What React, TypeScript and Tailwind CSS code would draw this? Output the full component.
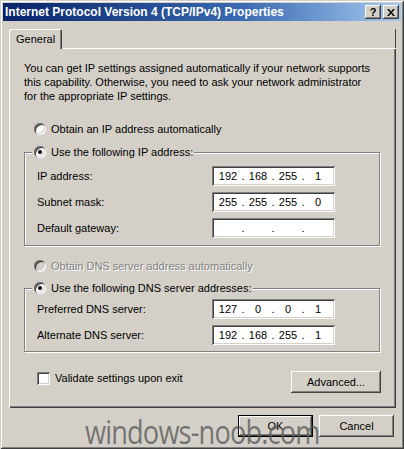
import React from "react";

const raised =
  "shadow-[inset_-1px_-1px_0_#404040,inset_1px_1px_0_#ffffff,inset_-2px_-2px_0_#808080,inset_2px_2px_0_#d4d0c8]";
const sunken =
  "shadow-[inset_1px_1px_0_#808080,inset_-1px_-1px_0_#ffffff,inset_2px_2px_0_#404040,inset_-2px_-2px_0_#d4d0c8]";

function Radio({ checked = false, disabled = false }: { checked?: boolean; disabled?: boolean }) {
  return (
    <span
      className={`flex w-[12px] h-[12px] shrink-0 items-center justify-center rounded-full ${
        disabled ? "bg-[#d4d0c8]" : "bg-white"
      } shadow-[inset_1px_1px_0_#808080,inset_-1px_-1px_0_#ffffff,inset_2px_2px_0_#404040,inset_-2px_-2px_0_#d4d0c8]`}
    >
      {checked && <span className="w-[4px] h-[4px] rounded-full bg-black" />}
    </span>
  );
}

function IpField({ parts }: { parts: string[] }) {
  return (
    <div className={`flex w-[123px] h-[20px] items-center bg-white pl-[4px] ${sunken}`}>
      {parts.map((p, i) => (
        <React.Fragment key={i}>
          {i > 0 && <span className="w-[6px] text-center">.</span>}
          <span className="w-[24px] text-center">{p}</span>
        </React.Fragment>
      ))}
    </div>
  );
}

function Row({ label, parts }: { label: string; parts: string[] }) {
  return (
    <div className="flex items-center h-[20px]">
      <span className="w-[187px] pl-[12px]">{label}</span>
      <IpField parts={parts} />
    </div>
  );
}

function Button({ children, isDefault = false, className = "" }: { children: React.ReactNode; isDefault?: boolean; className?: string }) {
  return (
    <div
      className={`flex items-center justify-center h-[22px] ${
        isDefault ? "border border-black" : ""
      } ${className}`}
    >
      <div className={`flex w-full h-full items-center justify-center ${raised}`}>{children}</div>
    </div>
  );
}

export default function App() {
  return (
    <div className="relative flex flex-col w-[404px] h-[449px] overflow-hidden bg-[#d4d0c8] p-[3px] font-['Liberation_Sans',Arial,sans-serif] text-[11px] leading-[14px] text-black shadow-[inset_1px_1px_0_#d4d0c8,inset_-1px_-1px_0_#404040,inset_2px_2px_0_#ffffff,inset_-2px_-2px_0_#808080]">
      {/* Title bar */}
      <div className="flex h-[18px] items-center justify-between bg-linear-to-r from-[#0a246a] via-[#3a6ab0] via-60% to-[#a6caf0] pl-[2px] pr-[2px]">
        <span className="text-[12px] font-bold text-white whitespace-nowrap">
          Internet Protocol Version 4 (TCP/IPv4) Properties
        </span>
        <div className="flex gap-[2px]">
          <div className={`flex w-[16px] h-[14px] items-center justify-center bg-[#d4d0c8] ${raised}`}>
            <span className="text-[11px] font-bold leading-[11px] pt-[1px]">?</span>
          </div>
          <div className={`flex w-[16px] h-[14px] items-center justify-center bg-[#d4d0c8] ${raised}`}>
            <svg width="8" height="7" viewBox="0 0 8 7" className="mt-[1px]">
              <path d="M0 0h2l2 2.5L6 0h2L5 3.5 8 7H6L4 4.5 2 7H0l3-3.5z" fill="#000" />
            </svg>
          </div>
        </div>
      </div>

      {/* Body */}
      <div className="flex flex-col pl-[6px] pr-[5px]">
        {/* Tabs row */}
        <div className="mt-[8px] flex h-[20px]">
          <div className="flex w-[53px] h-[20px] items-center rounded-t-[2px] pl-[7px] shadow-[inset_1px_1px_0_#ffffff,inset_-1px_0_0_#404040,inset_-2px_0_0_#808080]">
            General
          </div>
          <div className="flex-1 border-b border-white shadow-[inset_-1px_0_0_#404040]" />
        </div>

        {/* Panel */}
        <div className="h-[359px] pt-[12px] pl-[15px] pr-[16px] shadow-[inset_1px_0_0_#ffffff,inset_-1px_-1px_0_#404040,inset_-2px_-2px_0_#808080]">
          <div className="whitespace-nowrap">
            <div>You can get IP settings assigned automatically if your network supports</div>
            <div>this capability. Otherwise, you need to ask your network administrator</div>
            <div>for the appropriate IP settings.</div>
          </div>

          <div className="mt-[19px] flex h-[14px] items-center gap-[5px] pl-[10px]">
            <Radio />
            <span>Obtain an IP address automatically</span>
          </div>

          <div className="relative mt-[16px] flex flex-col gap-[6px] border border-[#808080] pt-[13px] pb-[7px] shadow-[inset_1px_1px_0_#ffffff,1px_1px_0_#ffffff]">
            <div className="absolute left-[7px] -top-[8px] flex h-[14px] items-center gap-[5px] bg-[#d4d0c8] pl-[2px] pr-[1px]">
              <Radio checked />
              <span>Use the following IP address:</span>
            </div>
            <Row label="IP address:" parts={["192", "168", "255", "1"]} />
            <Row label="Subnet mask:" parts={["255", "255", "255", "0"]} />
            <Row label="Default gateway:" parts={["", "", "", ""]} />
          </div>

          <div className="mt-[13px] flex h-[14px] items-center gap-[5px] pl-[10px]">
            <Radio disabled />
            <span className="text-[#808080] [text-shadow:1px_1px_0_#ffffff]">
              Obtain DNS server address automatically
            </span>
          </div>

          <div className="relative mt-[15px] flex flex-col gap-[6px] border border-[#808080] pt-[10px] pb-[6px] shadow-[inset_1px_1px_0_#ffffff,1px_1px_0_#ffffff]">
            <div className="absolute left-[7px] -top-[8px] flex h-[14px] items-center gap-[5px] bg-[#d4d0c8] pl-[2px] pr-[1px]">
              <Radio checked />
              <span>Use the following DNS server addresses:</span>
            </div>
            <Row label="Preferred DNS server:" parts={["127", "0", "0", "1"]} />
            <Row label="Alternate DNS server:" parts={["192", "168", "255", "1"]} />
          </div>

          <div className="mt-[19px] flex items-start">
            <div className="flex h-[14px] items-center gap-[5px] pl-[13px]">
              <span className={`w-[13px] h-[13px] bg-white ${sunken}`} />
              <span>Validate settings upon exit</span>
            </div>
            <Button className="ml-auto -mr-[1px] w-[90px]">Advanced...</Button>
          </div>
        </div>

        {/* Footer */}
        <div className="mt-[7px] flex justify-end gap-[6px] pr-[2px]">
          <Button isDefault className="w-[75px]">
            OK
          </Button>
          <Button className="w-[75px]">Cancel</Button>
        </div>
      </div>

      {/* Watermark */}
      <div className="pointer-events-none absolute left-[85px] top-[416px] origin-left scale-x-[0.85] font-['Open_Sans',sans-serif] text-[32px] leading-[32px] tracking-[-1px] text-[#5a5a5a]/80 whitespace-nowrap">
        windows-noob.com
      </div>
    </div>
  );
}
